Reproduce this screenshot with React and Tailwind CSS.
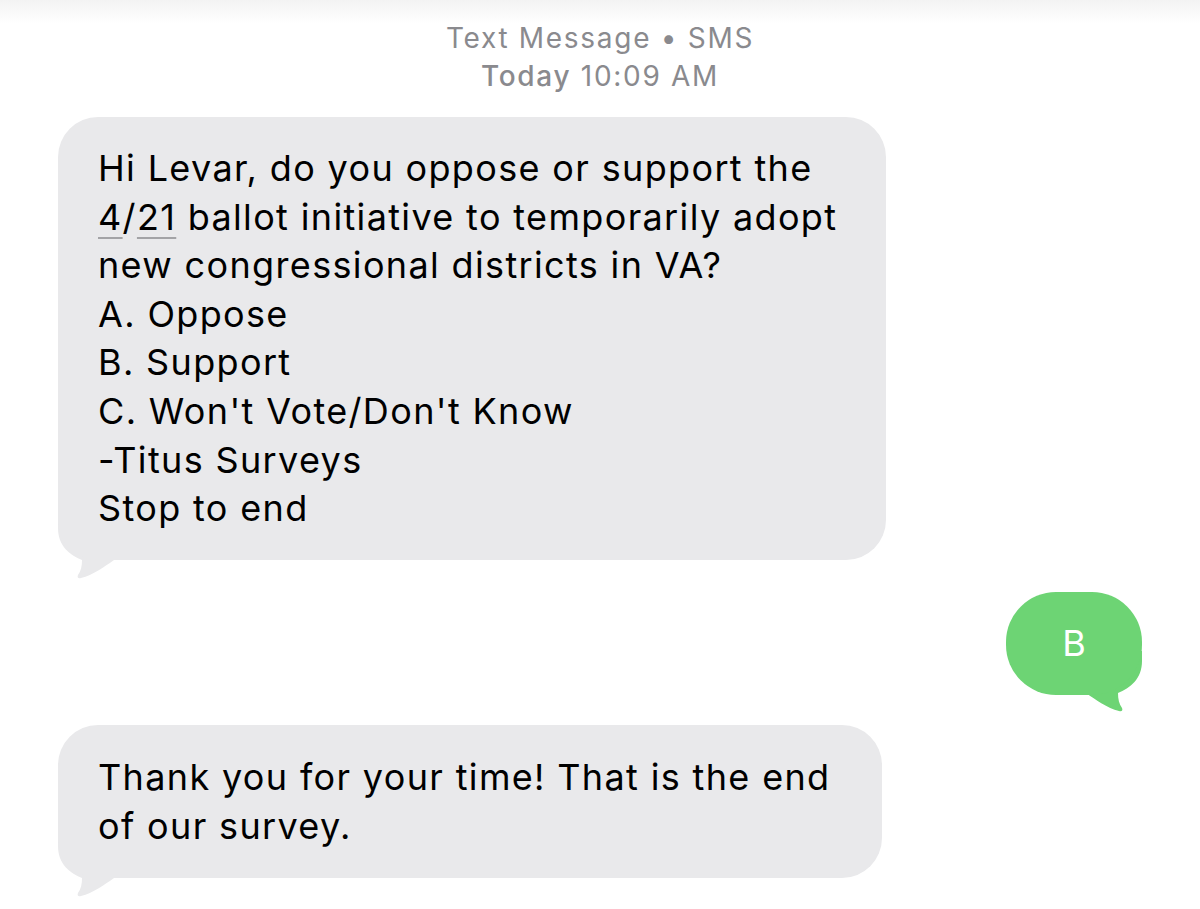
import React from "react";

const incomingLines = [
  "new congressional districts in VA?",
  "A. Oppose",
  "B. Support",
  "C. Won't Vote/Don't Know",
  "-Titus Surveys",
  "Stop to end",
];

const tailPath =
  "M0,0 L0,10 C0,28 12,37 24,42 C24,48 23,53 20,57 C19,59 20,61 23,60 C35,57 46,49 56,42 L56,0 Z";

function LeftTail({ color }) {
  return (
    <svg className="absolute left-0 bottom-[-20px]" width="60" height="62" viewBox="0 0 60 62">
      <path d={tailPath} fill={color} />
    </svg>
  );
}

function RightTail({ color }) {
  return (
    <svg
      className="absolute right-0 bottom-[-18px] -scale-x-100"
      width="60"
      height="62"
      viewBox="0 0 60 62"
    >
      <path d={tailPath} fill={color} />
    </svg>
  );
}

export default function App() {
  return (
    <main
      className="relative h-[909px] w-[1200px] overflow-hidden bg-white text-black"
      style={{ fontFamily: "Inter, 'Noto Sans', sans-serif" }}
    >
      <div className="absolute inset-x-0 top-0 h-[24px] bg-gradient-to-b from-[#f3f3f3] to-white" />

      <header className="relative flex flex-col items-center pt-[19px] text-[28px] leading-[38px] tracking-[1.7px] text-[#8a8a8e]">
        <p>Text Message • SMS</p>
        <p>
          <span className="font-medium">Today</span> 10:09 AM
        </p>
      </header>

      <section className="relative mt-[22px] ml-[58px] w-[828px]">
        <div className="relative">
          <LeftTail color="#e9e9eb" />
          <div className="relative rounded-[40px] bg-[#e9e9eb] px-[40px] py-[27px] text-[36px] leading-[48.6px] tracking-[1.35px]">
            <p>Hi Levar, do you oppose or support the</p>
            <p>
              <span className="underline decoration-[#a3a3a6] decoration-2 underline-offset-[7px]">4</span>/
              <span className="underline decoration-[#a3a3a6] decoration-2 underline-offset-[7px]">21</span> ballot initiative to temporarily adopt
            </p>
            {incomingLines.map((line) => (
              <p key={line}>{line}</p>
            ))}
          </div>
        </div>
      </section>

      <section className="mt-[32px] flex justify-end pr-[58px]">
        <div className="relative">
          <RightTail color="#6dd474" />
          <div className="relative flex h-[103px] w-[136px] items-center justify-center rounded-[50px] bg-[#6dd474] text-[36px] text-white">
            B
          </div>
        </div>
      </section>

      <section className="relative mt-[30px] ml-[58px] w-[824px]">
        <div className="relative">
          <LeftTail color="#e9e9eb" />
          <div className="relative rounded-[40px] bg-[#e9e9eb] px-[40px] pt-[28px] pb-[27px] text-[36px] leading-[49px] tracking-[1.35px]">
            <p>Thank you for your time! That is the end</p>
            <p>of our survey.</p>
          </div>
        </div>
      </section>
    </main>
  );
}
